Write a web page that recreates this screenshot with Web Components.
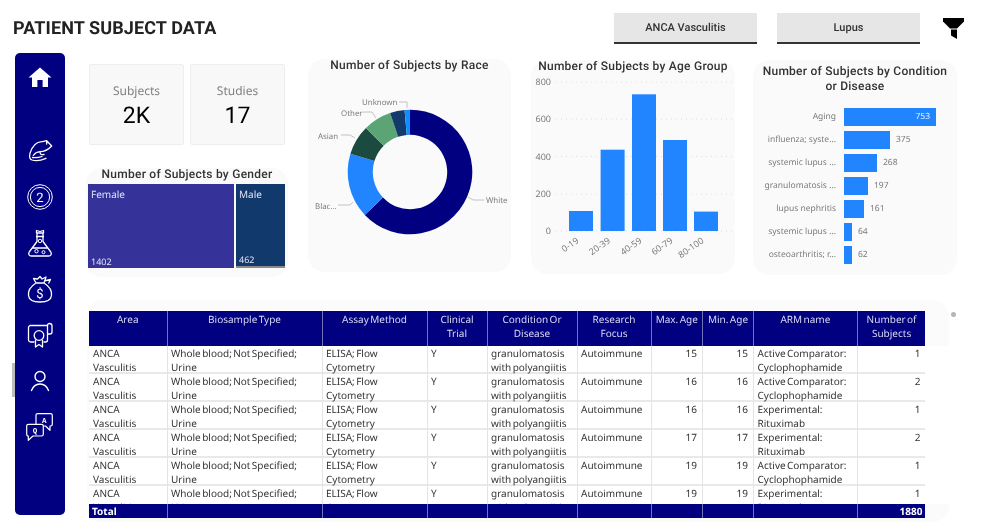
<!DOCTYPE html>
<html>
<head>
<meta charset="utf-8">
<title>Patient Subject Data</title>
<style>
  html, body { margin: 0; height: 100%; background: #fff; overflow: hidden; }
</style>
</head>
<body>
<patient-dashboard></patient-dashboard>
<script>
const TITLE_FONT = `Roboto, "Liberation Sans", sans-serif`;
const BODY_FONT = `"Noto Sans", "Open Sans", sans-serif`;

class AppSlicer extends HTMLElement {
    constructor() {
        super();
        this.attachShadow({ mode: 'open' }).innerHTML = `
        <style>
          :host {
            display: flex; align-items: center; justify-content: center;
            width: 143px; height: 29px; background: #e6e6e6;
            border-bottom: 2px solid #333;
            font: 500 11px ${TITLE_FONT}; color: #333;
          }
        </style>
        <slot></slot>`;
    }
}

class AppHeader extends HTMLElement {
    constructor() {
        super();
        this.attachShadow({ mode: 'open' }).innerHTML = `
        <style>
          :host { display: flex; align-items: flex-start; height: 53px; }
          h1 {
            margin: 19px auto 0 13px;
            font: 700 18px/20px ${TITLE_FONT}; letter-spacing: .1px; color: #222;
          }
          app-slicer { margin-top: 13px; }
          app-slicer + app-slicer { margin-left: 20px; }
          svg { margin: 18px 22px 0 23px; }
        </style>
        <h1>PATIENT SUBJECT DATA</h1>
        <app-slicer>ANCA Vasculitis</app-slicer>
        <app-slicer>Lupus</app-slicer>
        <svg width="21" height="22" viewBox="0 0 21 22">
          <path d="M0 0H21V3.5L14 10.5H7L0 3.5Z" fill="#000"/>
          <path d="M8 11.5H14V21L8 17.5Z" fill="#000"/>
        </svg>`;
    }
}

const NAV_ICONS = [
    `<g transform="translate(1 3)"><path d="M13 1.5 1.5 11.5H5V21H10.4V14H15.6V21H21V11.5H24.5Z" fill="#fff"/></g>`,
    `<path d="M25.700 9 20.700 3.700C18 4.500 17 4.500 15.700 4.700 10 5 6 10 4 16.300 3.300 19 3.500 22 6 23 9 24 14 24 20 21.300M7.300 18.500C9 16 11 15 14 14.700 17 14.700 21 14 25.700 9M14 14.700C14 17 15 18 18 17.500M6.500 20.500C10 21 13 20.500 16 19.500M20.700 3.700V7" fill="none" stroke="#fff" stroke-width="1.300" stroke-linecap="round" stroke-linejoin="round"/>`,
    `<g transform="translate(1 1)"><circle cx="13" cy="13" r="12.300" fill="none" stroke="#fff" stroke-width="1"/>
     <circle cx="13" cy="13" r="9.600" fill="none" stroke="#fff" stroke-width="1"/>
     <text x="13" y="17.600" text-anchor="middle" fill="#fff" font-size="13" font-family="Roboto, sans-serif">2</text>
     <path d="M8.500 20.200H17.500" stroke="#0000a0" stroke-width="1.500" stroke-dasharray="1 1"/></g>`,
    `<g transform="translate(1 0)"><path d="M10 7.500V12.500L2.200 23C1 25 2 27 4.500 27H21.500C24 27 25 25 23.800 23L16 12.500V7.500M9 7.500H17M9.500 4H16.500V1.500L13 2.500 9.500 1.500ZM10 7.500V4M16 7.500V4M5 19H21" fill="none" stroke="#fff" stroke-width="1.300" stroke-linejoin="round"/>
     <circle cx="13" cy="12" r="1.700" fill="none" stroke="#fff" stroke-width="1"/>
     <circle cx="9.500" cy="22.200" r="1.700" fill="none" stroke="#fff" stroke-width="1"/>
     <circle cx="16.500" cy="23.200" r="1.500" fill="none" stroke="#fff" stroke-width="1"/></g>`,
    `<g transform="translate(1 0)"><path d="M9 8C3.500 11.500 1 16.500 1.500 20.500 2 25 6 27 13 27 20 27 24 25 24.500 20.500 25 16.500 22.500 11.500 17 8M9 8H17M9 8 6.500 3.500 10.500 4 13 1.500 15 4 19 2 17 8M17 6 23.500 4.500 21.500 8.500" fill="none" stroke="#fff" stroke-width="1.300" stroke-linejoin="round"/>
     <text x="13" y="23" text-anchor="middle" fill="#fff" font-size="13" font-family="Roboto, sans-serif">$</text></g>`,
    `<g transform="translate(.5 2)"><path d="M8 19H4C3 19 2 18 2 17V4.500C2 3.500 3 2.500 4 2.500H21V17C21 18 20 19 19 19H17M21 2.500C21 1 22 .5 23 .5 24.500 .5 25.500 1.500 25.500 3V9C25.500 10 24.500 11 23.500 11H21" fill="none" stroke="#fff" stroke-width="1.300" stroke-linejoin="round"/>
     <circle cx="12.500" cy="12.500" r="4.800" fill="none" stroke="#fff" stroke-width="1.300"/>
     <path d="M9 16.500V24L12.500 21.500 16 24V16.500" fill="none" stroke="#fff" stroke-width="1.300" stroke-linejoin="round"/></g>`,
    `<g transform="translate(1 2.500)"><circle cx="13" cy="7" r="5" fill="none" stroke="#fff" stroke-width="1.400"/>
     <path d="M4.500 21C6 17 9 14.500 13 14.500S20 17 21.500 21" fill="none" stroke="#fff" stroke-width="1.400" stroke-linecap="round"/></g>`,
    `<path d="M10 11.300V2.200C10 1.200 10.700 .7 11.700 .7H24.600C25.600 .7 26.300 1.400 26.300 2.400V11.300C26.300 12.300 25.600 13 24.600 13H24V17.300L19.500 13H17.300" fill="none" stroke="#fff" stroke-width="1.200" stroke-linejoin="round"/>
     <path d="M2.400 11.300H15.600C16.600 11.300 17.300 12 17.300 13V21.300C17.300 22.300 16.600 23 15.600 23H7L2.300 27.300V23C1.300 23 .7 22.300 .7 21.300V13C.7 12 1.400 11.300 2.400 11.300Z" fill="none" stroke="#fff" stroke-width="1.200" stroke-linejoin="round"/>
     <text x="18.300" y="9.600" text-anchor="middle" fill="#fff" font-size="7.500" font-weight="700" font-family="Liberation Mono, monospace">A</text>
     <text x="9" y="19.900" text-anchor="middle" fill="#fff" font-size="7.500" font-weight="700" font-family="Liberation Mono, monospace">Q</text>`
];

class AppNav extends HTMLElement {
    constructor() {
        super();
        this.attachShadow({ mode: 'open' }).innerHTML = `
        <style>
          :host {
            display: flex; flex-direction: column; align-items: center; box-sizing: border-box;
            width: 50px; height: 462px; padding-top: 1px;
            background: #000080; border-radius: 5px; flex: none;
          }
          a { display: flex; align-items: center; justify-content: center; height: 46px; width: 100%; }
          a:first-of-type { margin-bottom: 28px; }
        </style>
        ${NAV_ICONS.map(icon => `<a><svg width="28" height="28" viewBox="0 0 28 28">${icon}</svg></a>`).join('')}`;
    }
}

class AppKpi extends HTMLElement {
    constructor() {
        super();
        this.attachShadow({ mode: 'open' }).innerHTML = `
        <style>
          :host {
            display: flex; flex-direction: column; align-items: center; box-sizing: border-box;
            width: 95px; height: 81px; padding-top: 18px;
            background: #f8f8f8; border: 1px solid #eeeeee; border-radius: 2px;
          }
          span { font: 12px/16px ${BODY_FONT}; color: #808080; }
          b { font: 400 23px/30px ${TITLE_FONT}; color: #000; margin-top: 2px; }
        </style>
        <span>${this.getAttribute('label')}</span>
        <b>${this.getAttribute('value')}</b>`;
    }
}

class AppCard extends HTMLElement {
    constructor() {
        super();
        this.attachShadow({ mode: 'open' }).innerHTML = `
        <style>
          :host {
            display: block; box-sizing: border-box; width: 204px;
            background: #fafafa; border-radius: 16px; flex: none;
          }
          h2 {
            margin: 0; text-align: center; color: #333;
            font: 500 12px/var(--line, 13px) ${TITLE_FONT}; letter-spacing: .25px;
            padding: var(--title-pad, 0);
          }
        </style>
        <h2>${this.getAttribute('heading')}</h2>
        <slot></slot>`;
    }
}

class GenderTreemap extends HTMLElement {
    constructor() {
        super();
        this.attachShadow({ mode: 'open' }).innerHTML = `
        <style>
          :host {
            display: flex; gap: 2px; height: 84px; margin: 3px 0 0 2px; width: 197px;
            font: 10px/14px ${BODY_FONT}; color: #dfe0f5;
          }
          div { box-sizing: border-box; display: flex; flex-direction: column; justify-content: space-between; padding: 3px 3px 0 3px; }
          .f { width: 146px; background: #35339a; }
          .m { width: 49px; background: #12396b; border-bottom: 2px solid #8a8a8a; }
          small { font-size: 9px; line-height: 13px; }
        </style>
        <div class="f"><span>Female</span><small>1402</small></div>
        <div class="m"><span>Male</span><small>462</small></div>`;
    }
}

class RaceDonut extends HTMLElement {
    constructor() {
        super();
        const cx = 102, cy = 100, R = 62.3, r = 37.2;
        const pt = (rad, deg) => {
            const a = deg * Math.PI / 180;
            return `${(cx + rad * Math.sin(a)).toFixed(2)} ${(cy - rad * Math.cos(a)).toFixed(2)}`;
        };
        const slice = (from, to, color) => `<path fill="${color}" d="M${pt(R, from)}A${R} ${R} 0 ${to - from > 180 ? 1 : 0} 1 ${pt(R, to)}L${pt(r, to)}A${r} ${r} 0 ${to - from > 180 ? 1 : 0} 0 ${pt(r, from)}Z"/>`;
        const slices = [
            [0, 226.5, '#000080'], [226.5, 287, '#2085ff'], [287, 315, '#1a4a40'],
            [315, 341.4, '#5ba575'], [341.4, 355, '#123a6b'], [355, 360, '#118dff']
        ];
        this.attachShadow({ mode: 'open' }).innerHTML = `
        <style>
          :host { display: block; height: 200px; }
          text { font: 7.900px ${BODY_FONT}; fill: #7c7c7c; }
          path.l { fill: none; stroke: #b5b5b5; stroke-width: .8; }
        </style>
        <svg width="204" height="200">
          ${slices.map(s => slice(s[0], s[1], s[2])).join('')}
          <path class="l" d="M160 125 165 128H176"/><text x="178" y="131">White</text>
          <path class="l" d="M45 130 42 133H30"/><text x="7" y="137">Blac...</text>
          <path class="l" d="M47 66 42 63H33"/><text x="10" y="67">Asian</text>
          <path class="l" d="M68 46 64 40H55"/><text x="33" y="44">Other</text>
          <path class="l" d="M99 36V30H91"/><text x="54" y="33">Unknown</text>
        </svg>`;
    }
}

class AgeColumns extends HTMLElement {
    constructor() {
        super();
        const ticks = [[800, 9], [600, 46], [400, 83.500], [200, 121], [0, 158]];
        const bars = [
            ['0-19', 38, 138], ['20-39', 69.600, 76.700], ['40-59', 101, 21.300],
            ['60-79', 132, 67], ['80-100', 163, 138.600]
        ];
        this.attachShadow({ mode: 'open' }).innerHTML = `
        <style>
          :host { display: block; height: 200px; }
          text { font: 9px ${BODY_FONT}; fill: #7c7c7c; }
          line { stroke: #dcdcdc; stroke-width: 1; stroke-dasharray: 1 4; }
        </style>
        <svg width="204" height="200">
          ${ticks.map(t => `<text x="20" y="${t[1] + 3}" text-anchor="end">${t[0]}</text><line x1="25" x2="203" y1="${t[1]}" y2="${t[1]}"/>`).join('')}
          ${bars.map(b => `<rect x="${b[1]}" y="${b[2]}" width="24" height="${158 - b[2]}" fill="#2085ff"/>
            <text transform="translate(${b[1] + 9} 167) rotate(-35)" text-anchor="end" dominant-baseline="middle">${b[0]}</text>`).join('')}
        </svg>`;
    }
}

class ConditionBars extends HTMLElement {
    constructor() {
        super();
        const rows = [
            ['Aging', 753], ['influenza; syste...', 375], ['systemic lupus ...', 268],
            ['granulomatosis ...', 197], ['lupus nephritis', 161], ['systemic lupus ...', 64], ['osteoarthritis; r...', 62]
        ];
        this.attachShadow({ mode: 'open' }).innerHTML = `
        <style>
          :host {
            display: grid; grid-template-columns: 83px 1fr; column-gap: 8px; grid-auto-rows: 18px; row-gap: 5px;
            margin-top: 14px; padding-bottom: 10px;
            font: 8.500px/18px ${BODY_FONT}; color: #7c7c7c;
          }
          .name { text-align: right; white-space: nowrap; }
          .track { display: flex; align-items: center; gap: 6px; }
          .bar { height: 18px; background: #2085ff; flex: none; color: #e8f1ff; text-align: right; box-sizing: border-box; padding-right: 6px; }
        </style>
        ${rows.map((row, i) => `<div class="name">${row[0]}</div>
          <div class="track"><div class="bar" style="width:${Math.round(row[1] / 753 * 91.500)}px">${i === 0 ? row[1] : ''}</div>${i === 0 ? '' : `<span>${row[1]}</span>`}</div>`).join('')}`;
    }
}

const COLUMNS = ['77.500px', '155px', '105px', '60px', '90px', '74px', '51.500px', '51px', '103.700px', '68.800px'];
const HEADERS = ['Area', 'Biosample Type', 'Assay Method', 'Clinical Trial', 'Condition Or Disease', 'Research Focus', 'Max. Age', 'Min. Age', 'ARM name', 'Number of Subjects'];
const ACTIVE = 'Active Comparator: Cyclophophamide';
const RITUX = 'Experimental: Rituximab';
const ROWS = [
    [15, ACTIVE, 1], [16, ACTIVE, 2], [16, RITUX, 1],
    [17, RITUX, 2], [19, ACTIVE, 1], [19, RITUX, 1]
];

class SubjectTable extends HTMLElement {
    constructor() {
        super();
        const cells = (age, arm, count) => [
            'ANCA Vasculitis', 'Whole blood; Not Specified; Urine', 'ELISA; Flow Cytometry', 'Y',
            'granulomatosis with polyangiitis', 'Autoimmune', age, age, arm, count
        ];
        const isNum = i => i === 6 || i === 7 || i === 9;
        this.attachShadow({ mode: 'open' }).innerHTML = `
        <style>
          :host {
            display: block; position: relative; box-sizing: border-box;
            width: 862px; height: 222px; padding: 11px 0 0 2px; margin-left: 1px;
            background: #fbfbfb; border-radius: 16px;
            font: 10px/14px ${BODY_FONT}; word-spacing: -1.200px; color: #333;
          }
          .row { display: grid; grid-template-columns: ${COLUMNS.join(' ')}; width: 836px; }
          .head { height: 35px; background: #000080; color: #d9d9f2; text-align: center; }
          .head div { padding: 1px 3px 0; border-left: 1px solid #7373b8; box-sizing: border-box; }
          .head div:first-child, .foot div:first-child, .body .row div:first-child { border-left: 0; }
          .body { height: 158px; overflow: hidden; background: #fff; }
          .body .row { height: 28px; box-shadow: inset 0 -2px 0 #e9e9e9; }
          .body .row div { padding: 0 5px 0 3.500px; border-left: 1px solid #e4e4e4; }
          .body .row div:first-child { padding-left: 4px; }
          .body .row div.n { text-align: right; }
          .foot { height: 14px; background: #000080; color: #fff; font-weight: 700; }
          .foot div { padding: 0 3px; border-left: 1px solid #7373b8; text-align: right; }
          .foot div:first-child { text-align: left; }
          .dot { position: absolute; right: -7px; top: 12px; width: 5px; height: 5px; border-radius: 50%; background: #b5b5b5; }
        </style>
        <div class="row head">${HEADERS.map(h => `<div>${h}</div>`).join('')}</div>
        <div class="body">
          ${ROWS.map(r => `<div class="row">${cells(r[0], r[1], r[2]).map((c, i) => `<div class="${isNum(i) ? 'n' : ''}">${c}</div>`).join('')}</div>`).join('')}
        </div>
        <div class="row foot">${HEADERS.map((h, i) => `<div>${i === 0 ? 'Total' : i === 9 ? '1880' : ''}</div>`).join('')}</div>
        <div class="dot"></div>`;
    }
}

class PatientDashboard extends HTMLElement {
    constructor() {
        super();
        this.attachShadow({ mode: 'open' }).innerHTML = `
        <style>
          :host {
            display: block; position: relative; width: 986px; height: 532px;
            text-rendering: geometricPrecision; filter: blur(.35px);
          }
          main { display: flex; padding-left: 15px; }
          .grab { position: absolute; left: 12px; top: 363px; width: 3px; height: 34px; background: #bdbdbd; }
          .content { margin-left: 21px; }
          .top { display: flex; height: 247px; }
          .left { width: 202px; flex: none; padding-top: 11px; }
          .kpis { display: flex; gap: 6px; margin-left: 3px; }
          .gender { width: 202px; height: 109px; margin-top: 23px; }
          .race { margin: 6px 0 0 20px; width: 203px; height: 213px; }
          .age { margin: 7px 0 0 20px; height: 214px; }
          .cond { margin: 7px 0 0 18px; height: 215px; --line: 15px; --title-pad: 4px 4px 0; }
        </style>
        <app-header></app-header>
        <main>
          <app-nav></app-nav>
          <div class="content">
            <div class="top">
              <div class="left">
                <div class="kpis">
                  <app-kpi label="Subjects" value="2K"></app-kpi>
                  <app-kpi label="Studies" value="17"></app-kpi>
                </div>
                <app-card class="gender" heading="Number of Subjects by Gender"><gender-treemap></gender-treemap></app-card>
              </div>
              <app-card class="race" heading="Number of Subjects by Race"><race-donut></race-donut></app-card>
              <app-card class="age" heading="Number of Subjects by Age Group"><age-columns></age-columns></app-card>
              <app-card class="cond" heading="Number of Subjects by Condition or Disease"><condition-bars></condition-bars></app-card>
            </div>
            <subject-table></subject-table>
          </div>
        </main>
        <div class="grab"></div>`;
    }
}

window.customElements.define('app-slicer', AppSlicer);
window.customElements.define('app-header', AppHeader);
window.customElements.define('app-nav', AppNav);
window.customElements.define('app-kpi', AppKpi);
window.customElements.define('app-card', AppCard);
window.customElements.define('gender-treemap', GenderTreemap);
window.customElements.define('race-donut', RaceDonut);
window.customElements.define('age-columns', AgeColumns);
window.customElements.define('condition-bars', ConditionBars);
window.customElements.define('subject-table', SubjectTable);
window.customElements.define('patient-dashboard', PatientDashboard);
</script>
</body>
</html>
